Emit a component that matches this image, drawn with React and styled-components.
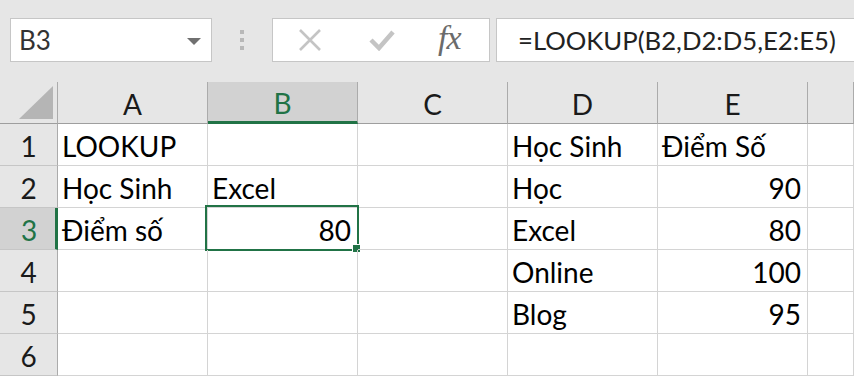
import styled, { createGlobalStyle } from "styled-components";

const GREEN = "#217346";

const columns = ["A", "B", "C", "D", "E", ""];

const rows = [
  ["LOOKUP", "", "", "Học Sinh", "Điểm Số", ""],
  ["Học Sinh", "Excel", "", "Học", 90, ""],
  ["Điểm số", 80, "", "Excel", 80, ""],
  ["", "", "", "Online", 100, ""],
  ["", "", "", "Blog", 95, ""],
  ["", "", "", "", "", ""],
];

const activeRow = 2;
const activeCol = 1;

const App = () => {
  return (
    <>
      <GlobalStyle />
      <Window>
        <Toolbar>
          <NameBox>
            <span>B3</span>
            <DropArrow />
          </NameBox>
          <Grip>
            <i />
            <i />
            <i />
          </Grip>
          <ActionBox>
            <ActionIcon width="24" height="22" viewBox="0 0 24 22">
              <path d="M2 1 L22 21 M22 1 L2 21" />
            </ActionIcon>
            <CheckIcon width="26" height="22" viewBox="0 0 26 22">
              <path d="M2 11 L10 19 L24 3" />
            </CheckIcon>
            <Fx>fx</Fx>
          </ActionBox>
          <FormulaBox>=LOOKUP(B2,D2:D5,E2:E5)</FormulaBox>
        </Toolbar>

        <Sheet>
          <Corner>
            <svg width="34" height="33" viewBox="0 0 34 33">
              <polygon points="34,0 34,33 0,33" fill="#b5b5b5" />
            </svg>
          </Corner>
          {columns.map((c, i) => (
            <ColHeader key={"h" + i} selected={i === activeCol}>
              {c}
            </ColHeader>
          ))}
          {rows.map((row, r) => (
            <Row key={r}>
              <RowHeader selected={r === activeRow}>{r + 1}</RowHeader>
              {row.map((v, c) => (
                <Cell
                  key={c}
                  numeric={typeof v === "number"}
                  active={r === activeRow && c === activeCol}
                >
                  {v}
                </Cell>
              ))}
            </Row>
          ))}
        </Sheet>
      </Window>
    </>
  );
};

export default App;

const GlobalStyle = createGlobalStyle`
  html, body {
    margin: 0;
    padding: 0;
    background: #ffffff;
  }
  body {
    font-family: "Lato", "Open Sans", sans-serif;
    overflow: hidden;
  }
`;

const Window = styled.div`
  width: 854px;
  height: 376px;
  overflow: hidden;
  background: #ffffff;
`;

const Toolbar = styled.div`
  display: flex;
  align-items: flex-start;
  height: 82px;
  box-sizing: border-box;
  padding: 18px 0 0 10px;
  background: #e6e6e6;
  white-space: nowrap;
`;

const NameBox = styled.div`
  display: flex;
  align-items: center;
  justify-content: space-between;
  flex: none;
  box-sizing: border-box;
  width: 202px;
  height: 44px;
  padding: 0 10px 0 8px;
  background: #ffffff;
  border: 1px solid #c6c6c6;
  font-size: 26px;
  color: #333333;
`;

const DropArrow = styled.span`
  width: 0;
  height: 0;
  border-left: 7px solid transparent;
  border-right: 7px solid transparent;
  border-top: 7px solid #707070;
  margin-top: 2px;
`;

const Grip = styled.div`
  display: flex;
  flex-direction: column;
  gap: 4px;
  flex: none;
  margin: 12px 28px 0 28px;

  i {
    display: block;
    width: 4px;
    height: 4px;
    background: #b8b8b8;
  }
`;

const ActionBox = styled.div`
  display: flex;
  align-items: center;
  flex: none;
  box-sizing: border-box;
  width: 218px;
  height: 44px;
  padding-left: 25px;
  background: #ffffff;
  border: 1px solid #c6c6c6;
`;

const ActionIcon = styled.svg`
  flex: none;
  fill: none;
  stroke: #c4c4c4;
  stroke-width: 2.6;
`;

const CheckIcon = styled(ActionIcon)`
  margin-left: 47px;
  stroke-width: 4.5;
  stroke-linejoin: miter;
`;

const Fx = styled.span`
  margin-left: 43px;
  font-family: "Liberation Serif", "DejaVu Serif", serif;
  font-style: italic;
  font-size: 34px;
  color: #6b6b6b;
  letter-spacing: -1px;
  line-height: 1;
  margin-top: -4px;
`;

const FormulaBox = styled.div`
  display: flex;
  align-items: center;
  flex: none;
  box-sizing: border-box;
  width: 420px;
  height: 44px;
  margin-left: 6px;
  padding-left: 21px;
  background: #ffffff;
  border: 1px solid #c6c6c6;
  font-size: 25.7px;
  color: #222222;
`;

const Sheet = styled.div`
  display: grid;
  grid-template-columns: 58px repeat(5, 150px) 1fr;
  grid-auto-rows: 42px;
`;

const Row = styled.div`
  display: contents;
`;

const HeaderBase = styled.div`
  display: flex;
  align-items: center;
  justify-content: center;
  box-sizing: border-box;
  background: #e6e6e6;
  font-size: 28px;
  color: #1a1a1a;
`;

const Corner = styled(HeaderBase)`
  align-items: flex-end;
  justify-content: flex-end;
  padding: 0 4px 4px 0;
  border-right: 1px solid #ababab;
  border-bottom: 1px solid #9e9e9e;
`;

const ColHeader = styled(HeaderBase)`
  padding-top: 2px;
  border-right: 1px solid #ababab;
  border-bottom: ${(p) => (p.selected ? `3px solid ${GREEN}` : "1px solid #9e9e9e")};
  background: ${(p) => (p.selected ? "#d2d2d2" : "#e6e6e6")};
  color: ${(p) => (p.selected ? GREEN : "#1a1a1a")};
`;

const RowHeader = styled(HeaderBase)`
  padding: 2px 0 0 ${(p) => (p.selected ? "3px" : "0")};
  border-bottom: 1px solid #c6c6c6;
  border-right: ${(p) => (p.selected ? `3px solid ${GREEN}` : "1px solid #ababab")};
  background: ${(p) => (p.selected ? "#d2d2d2" : "#e6e6e6")};
  color: ${(p) => (p.selected ? GREEN : "#1a1a1a")};
`;

const Cell = styled.div`
  position: relative;
  display: flex;
  align-items: center;
  justify-content: ${(p) => (p.numeric ? "flex-end" : "flex-start")};
  box-sizing: border-box;
  padding: 2px 6px 0 4px;
  border-right: 1px solid #d4d4d4;
  border-bottom: 1px solid #d4d4d4;
  font-size: 28px;
  color: #000000;
  white-space: nowrap;

  ${(p) =>
    p.active &&
    `
    &::before {
      content: "";
      position: absolute;
      left: -3px;
      top: -3px;
      right: -2px;
      bottom: -2px;
      border: 2px solid ${GREEN};
      pointer-events: none;
    }
    &::after {
      content: "";
      position: absolute;
      right: -4px;
      bottom: -4px;
      width: 7px;
      height: 7px;
      background: ${GREEN};
      border: 1px solid #ffffff;
    }
  `}
`;
